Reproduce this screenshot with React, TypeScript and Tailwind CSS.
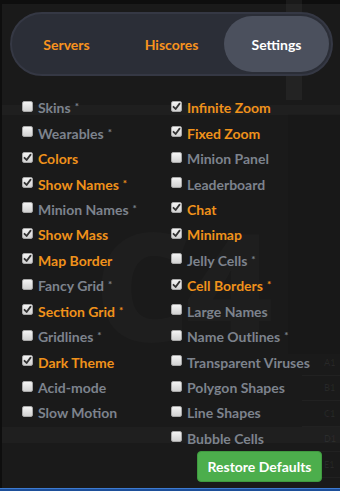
import React from "react";

type Item = { label: string; on: boolean; star?: boolean };

const left: Item[] = [
  { label: "Skins", on: false, star: true },
  { label: "Wearables", on: false, star: true },
  { label: "Colors", on: true },
  { label: "Show Names", on: true, star: true },
  { label: "Minion Names", on: false, star: true },
  { label: "Show Mass", on: true },
  { label: "Map Border", on: true },
  { label: "Fancy Grid", on: false, star: true },
  { label: "Section Grid", on: true, star: true },
  { label: "Gridlines", on: false, star: true },
  { label: "Dark Theme", on: true },
  { label: "Acid-mode", on: false },
  { label: "Slow Motion", on: false },
];

const right: Item[] = [
  { label: "Infinite Zoom", on: true },
  { label: "Fixed Zoom", on: true },
  { label: "Minion Panel", on: false },
  { label: "Leaderboard", on: false },
  { label: "Chat", on: true },
  { label: "Minimap", on: true },
  { label: "Jelly Cells", on: false, star: true },
  { label: "Cell Borders", on: true, star: true },
  { label: "Large Names", on: false },
  { label: "Name Outlines", on: false, star: true },
  { label: "Transparent Viruses", on: false },
  { label: "Polygon Shapes", on: false },
  { label: "Line Shapes", on: false },
  { label: "Bubble Cells", on: false },
];

function Box({ on }: { on: boolean }) {
  return (
    <span className="w-[11px] h-[11px] rounded-[2px] bg-gradient-to-b from-[#f4f4f4] to-[#d2d2d2] border border-[#a8a8a8] flex items-center justify-center shrink-0 mt-[-3px]">
      {on && (
        <svg width="9" height="9" viewBox="0 0 9 9">
          <path d="M1.5 4.8 L3.6 7 L7.6 1.6" stroke="#333" strokeWidth="1.8" fill="none" strokeLinecap="round" strokeLinejoin="round" />
        </svg>
      )}
    </span>
  );
}

function Row({ item }: { item: Item }) {
  return (
    <div className="h-[25.45px] flex items-center gap-[5px]">
      <Box on={item.on} />
      <span className={item.on ? "text-[#f0921b]" : "text-[#7d838d]"}>
        {item.label}
        {item.star && <span className="text-[10px] ml-[4px] relative top-[-3px]">*</span>}
      </span>
    </div>
  );
}

export default function App() {
  return (
    <div
      className="relative w-[340px] h-[491px] bg-[#0e0e0e] overflow-hidden"
      style={{ fontFamily: "Lato, 'Open Sans', sans-serif" }}
    >
      {/* game background */}
      <div className="absolute left-[286px] top-0 w-[16px] h-[100px] bg-[#1a1a1a]" />
      <div className="absolute left-0 bottom-0 w-full h-[3px] bg-[#1d4f9a] border-t border-[#3d7bd0]" />

      <div className="absolute left-[2px] top-[4px] right-0 h-[484px] bg-[#1b1b1b]/95 overflow-hidden">
        {/* faint background grid */}
        <div className="absolute left-0 right-0 top-[101px] h-[10px] bg-white/[0.025]" />
        <div className="absolute left-0 right-0 top-[423px] h-[16px] bg-white/[0.025]" />
        <div className="absolute left-[284px] top-0 w-[16px] h-[96px] bg-white/[0.04]" />
        <div className="absolute left-[286px] top-[110px] w-[60px] h-[240px] bg-black/[0.06]" />
        <div
          className="absolute left-[92px] top-[205px] text-[150px] font-black leading-none text-white/[0.02] tracking-[-6px]"
          style={{ fontFamily: "'Open Sans', sans-serif" }}
        >
          C4
        </div>
        <div className="absolute left-[300px] top-[346px] w-[40px] flex flex-col text-[9px] font-bold text-white/[0.06]">
          {["A1", "B1", "C1", "D1", "E1"].map((l) => (
            <div key={l} className="h-[25.5px] flex items-center pl-[22px] border-b border-white/[0.03]">
              {l}
            </div>
          ))}
        </div>

        <div className="relative flex flex-col">
          {/* tabs */}
          <div className="mt-[8px] ml-[8px] w-[323px] h-[64px] rounded-full bg-[#2b2e37] border-[2px] border-[#353844] flex items-center p-[2px] text-[14px] font-bold">
            <div className="flex-1 text-center text-[#f7931e]">Servers</div>
            <div className="flex-1 text-center text-[#f7931e]">Hiscores</div>
            <div className="w-[105px] h-[56px] rounded-full bg-[#4b505d] flex items-center justify-center text-white">
              Settings
            </div>
          </div>

          {/* options */}
          <div className="flex mt-[19px] text-[14px] font-bold">
            <div className="w-[169px] pl-[20px] flex flex-col">
              {left.map((it) => (
                <Row key={it.label} item={it} />
              ))}
            </div>
            <div className="flex flex-col">
              {right.map((it) => (
                <Row key={it.label} item={it} />
              ))}
            </div>
          </div>

          <div className="flex justify-end pr-[18px]">
            <button className="w-[125px] h-[31px] rounded-[4px] bg-[#4cae4c] border border-[#3f9a3f] text-white text-[14px] font-bold">
              Restore Defaults
            </button>
          </div>
        </div>
      </div>
    </div>
  );
}
